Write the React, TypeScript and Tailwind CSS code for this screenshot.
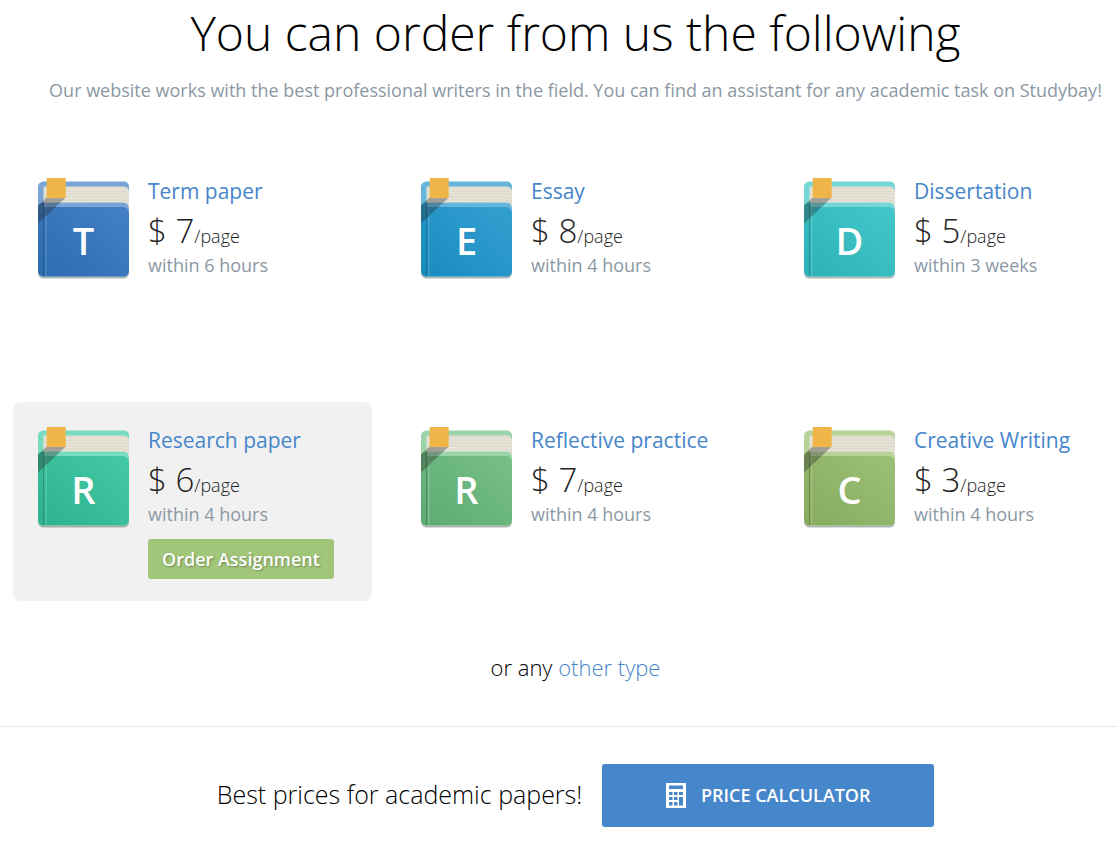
import React from "react";

type Paper = {
  id: string;
  title: string;
  letter: string;
  price: number;
  deadline: string;
  edge: string;
  from: string;
  to: string;
  active?: boolean;
};

const papers: Paper[] = [
  { id: "term", title: "Term paper", letter: "T", price: 7, deadline: "within 6 hours", edge: "#78a4d6", from: "#2c6cb1", to: "#4580c4" },
  { id: "essay", title: "Essay", letter: "E", price: 8, deadline: "within 4 hours", edge: "#66b6dc", from: "#1a8bbd", to: "#34a0d2" },
  { id: "dissertation", title: "Dissertation", letter: "D", price: 5, deadline: "within 3 weeks", edge: "#75d6d6", from: "#2cb1b6", to: "#44c8ca" },
  { id: "research", title: "Research paper", letter: "R", price: 6, deadline: "within 4 hours", edge: "#78dabf", from: "#2db28f", to: "#45caa6", active: true },
  { id: "reflective", title: "Reflective practice", letter: "R", price: 7, deadline: "within 4 hours", edge: "#9bd3aa", from: "#5eaa72", to: "#77c189" },
  { id: "creative", title: "Creative Writing", letter: "C", price: 3, deadline: "within 4 hours", edge: "#b7d299", from: "#86aa5e", to: "#9dc176" },
];

function Book({ paper }: { paper: Paper }) {
  const gradient = `cover-${paper.id}`;
  return (
    <svg className="shrink-0" width="91" height="101" viewBox="0 0 91 101" aria-hidden="true">
      <defs>
        <linearGradient id={gradient} x1="0" y1="1" x2="1" y2="0">
          <stop offset="0" stopColor={paper.from} />
          <stop offset="1" stopColor={paper.to} />
        </linearGradient>
      </defs>
      <path d="M0 30V95a5.500 5.500 0 0 0 5.500 5.500h80a5.500 5.500 0 0 0 5.500-5.500V30Z" fill="#5f6f6c" opacity=".5" />
      <path d="M0 9a5.500 5.500 0 0 1 5.500-5.500H86a5 5 0 0 1 5 5V32H0Z" fill={paper.edge} />
      <path d="M5.500 8.500H86q5 1 5 5V32H5.500Z" fill="#e9e5d8" />
      <g fill="none" stroke="#d7d3c7" strokeWidth="1">
        <path d="M6 10H84q5 0 7 4" />
        <path d="M6 13H84q5 0 7 4" />
        <path d="M6 16H84q5 0 7 4" />
        <path d="M6 19H84q5 0 7 4" />
        <path d="M6 22H84q5 0 7 4" />
      </g>
      <path d="M0 29 5.500 24.500H85q6 0 6 7V42H0Z" fill={paper.edge} />
      <path d="M0 28q2-3.500 6-3.500V29H85q6 .5 6 7V93.500a5 5 0 0 1-5 5H5a5 5 0 0 1-5-5Z" fill={`url(#${gradient})`} />
      <path d="M0 93.500a5 5 0 0 0 5 5H86a5 5 0 0 0 5-5" fill="none" stroke={paper.edge} strokeWidth="1" opacity=".5" />
      <path d="M5.500 25V98" stroke="#000" strokeWidth="1" opacity=".22" />
      <path d="M8 26V98" stroke={paper.edge} strokeWidth="1.200" opacity=".5" />
      <path d="M8.700 19.500H27.700L0 45.500V27.500Z" fill="#242424" opacity=".34" />
      <path d="M8.700 0H27.700V20H8.700Z" fill="#f0b548" />
      <text x="45.500" y="77" textAnchor="middle" fill="#fff" className="font-['Open_Sans',sans-serif] text-[38px] font-semibold">
        {paper.letter}
      </text>
    </svg>
  );
}

function PaperCard({ paper }: { paper: Paper }) {
  return (
    <article className={`flex items-start gap-[19px] rounded-lg p-[25px] pb-[22px] ${paper.active ? "bg-[#f1f1f1]" : ""}`}>
      <Book paper={paper} />
      <div className="flex flex-col items-start">
        <h2 className="text-[21px] leading-[26px] text-[#4686ca]">
          <a href={`#${paper.id}`}>{paper.title}</a>
        </h2>
        <p className="mt-1 flex items-baseline font-light">
          <span className="text-[33px] leading-[45px]">$ {paper.price}</span>
          <span className="text-[18px] leading-6">/page</span>
        </p>
        <p className="text-[18px] leading-6 text-[#8b98a4]">{paper.deadline}</p>
        {paper.active && (
          <button type="button" className="mt-[13px] h-10 rounded-[3px] bg-[#a1c67a] px-[14px] text-[18px] font-semibold text-white [text-shadow:1px_1px_2px_rgba(0,0,0,0.3)]">
            Order Assignment
          </button>
        )}
      </div>
    </article>
  );
}

function CalculatorIcon() {
  return (
    <svg width="20" height="25" viewBox="0 0 20 25" aria-hidden="true">
      <path
        fill="#fff"
        fillRule="evenodd"
        d="M0 0H20V25H0ZM3 2.500V6H17V2.500ZM3 9V12H6.500V9ZM8 9V12H11.500V9ZM13 9V12H17V9ZM3 14V17H6.500V14ZM8 14V17H11.500V14ZM3 19V22.500H6.500V19ZM8 19V22.500H11.500V19ZM13 14V22.500H17V14Z"
      />
    </svg>
  );
}

export default function App() {
  return (
    <div className="overflow-hidden bg-white font-['Open_Sans',sans-serif] text-[#222]">
      <main className="-mr-[33px]">
        <header className="text-center">
          <h1 className="text-[48px] leading-[66px] font-light text-black">You can order from us the following</h1>
          <p className="mt-3 text-[18px] leading-6 text-[#8b98a4]">
            Our website works with the best professional writers in the field. You can find an assistant for any academic task on Studybay!
          </p>
        </header>
        <section className="mt-[51px] grid auto-rows-fr grid-cols-3 gap-x-6 gap-y-[50px] px-[13px]">
          {papers.map((paper) => (
            <PaperCard key={paper.id} paper={paper} />
          ))}
        </section>
        <p className="mt-[50px] text-center text-[22px] leading-8 font-light text-black">
          or any{" "}
          <a href="#other" className="text-[#4686ca]">
            other type
          </a>
        </p>
        <footer className="mt-[43px] flex items-center justify-center gap-5 border-t border-[#e8e8e8] pt-[37px] pb-5">
          <p className="pb-1 text-[25px] leading-8 font-light text-black">Best prices for academic papers!</p>
          <button type="button" className="flex h-[63px] w-[332px] items-center justify-center gap-[15px] rounded-[3px] bg-[#4686ca] text-[18px] font-semibold text-white">
            <CalculatorIcon />
            PRICE CALCULATOR
          </button>
        </footer>
      </main>
    </div>
  );
}
